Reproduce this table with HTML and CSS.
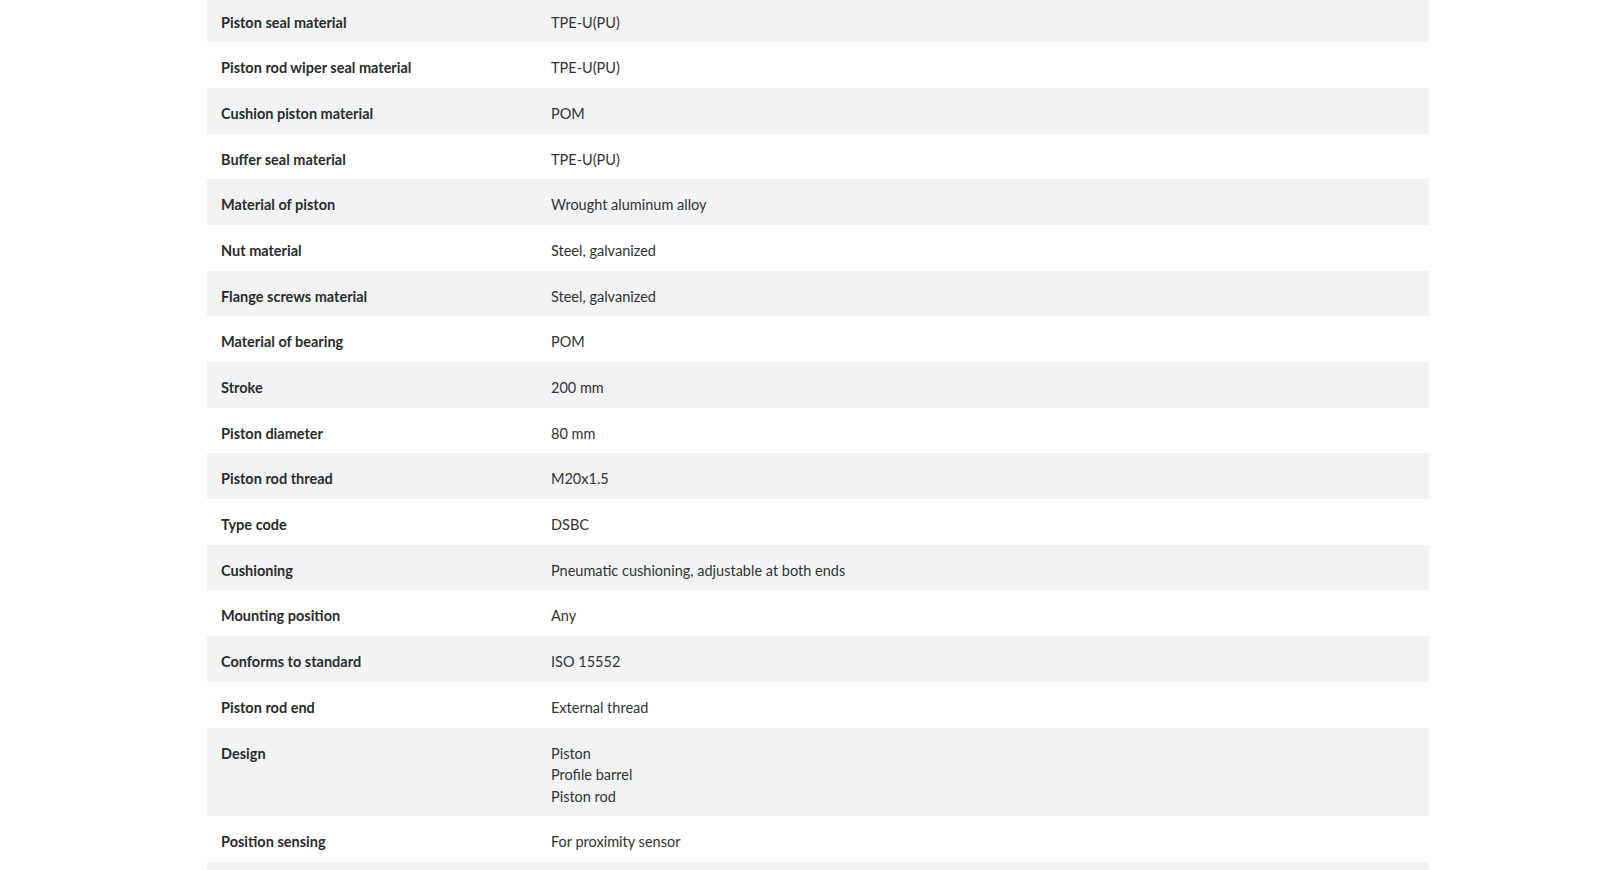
FILE: index.html
```html
<!DOCTYPE html>
<html lang="en">
<head>
    <meta charset="UTF-8">
    <meta name="viewport" content="width=device-width, initial-scale=1.0">
    <title>Technical data</title>
    <link rel="stylesheet" href="styles.css">
</head>
<body>

    <div class="container">
        <!-- Technical data table -->
        <table class="specs">
            <tr><th>Piston seal material</th><td>TPE-U(PU)</td></tr>
            <tr><th>Piston rod wiper seal material</th><td>TPE-U(PU)</td></tr>
            <tr><th>Cushion piston material</th><td>POM</td></tr>
            <tr><th>Buffer seal material</th><td>TPE-U(PU)</td></tr>
            <tr><th>Material of piston</th><td>Wrought aluminum alloy</td></tr>
            <tr><th>Nut material</th><td>Steel, galvanized</td></tr>
            <tr><th>Flange screws material</th><td>Steel, galvanized</td></tr>
            <tr><th>Material of bearing</th><td>POM</td></tr>
            <tr><th>Stroke</th><td>200 mm</td></tr>
            <tr><th>Piston diameter</th><td>80 mm</td></tr>
            <tr><th>Piston rod thread</th><td>M20x1.5</td></tr>
            <tr><th>Type code</th><td>DSBC</td></tr>
            <tr><th>Cushioning</th><td>Pneumatic cushioning, adjustable at both ends</td></tr>
            <tr><th>Mounting position</th><td>Any</td></tr>
            <tr><th>Conforms to standard</th><td>ISO 15552</td></tr>
            <tr><th>Piston rod end</th><td>External thread</td></tr>
            <tr><th>Design</th><td>Piston<br>Profile barrel<br>Piston rod</td></tr>
            <tr><th>Position sensing</th><td>For proximity sensor</td></tr>
            <!-- next row starts below the fold -->
            <tr class="spacer"><th></th><td></td></tr>
        </table>
    </div>

</body>
</html>
```
FILE: styles.css
```css
body {
    margin: 0;
    padding: 0;
    background-color: #fff;
    font-family: Lato, "Liberation Sans", sans-serif;
    font-size: 14.5px;
    color: #333;
}
.container {
    width: 1222px;
    margin: -3.5px 0 0 207px; /* page is scrolled a little */
}
.specs {
    width: 100%;
    border-collapse: collapse;
}
.specs th,
.specs td {
    padding: 15px 14px 9.2px;
    line-height: 21.5px;
    text-align: left;
    vertical-align: top;
}
.specs th {
    width: 302px;
    font-weight: 700;
    color: #2b2b2b;
}
.specs td {
    font-weight: 400;
}
.specs tr:nth-child(odd) {
    background-color: #f2f3f5;
}
.specs .spacer th,
.specs .spacer td {
    height: 21.5px;
}
```
